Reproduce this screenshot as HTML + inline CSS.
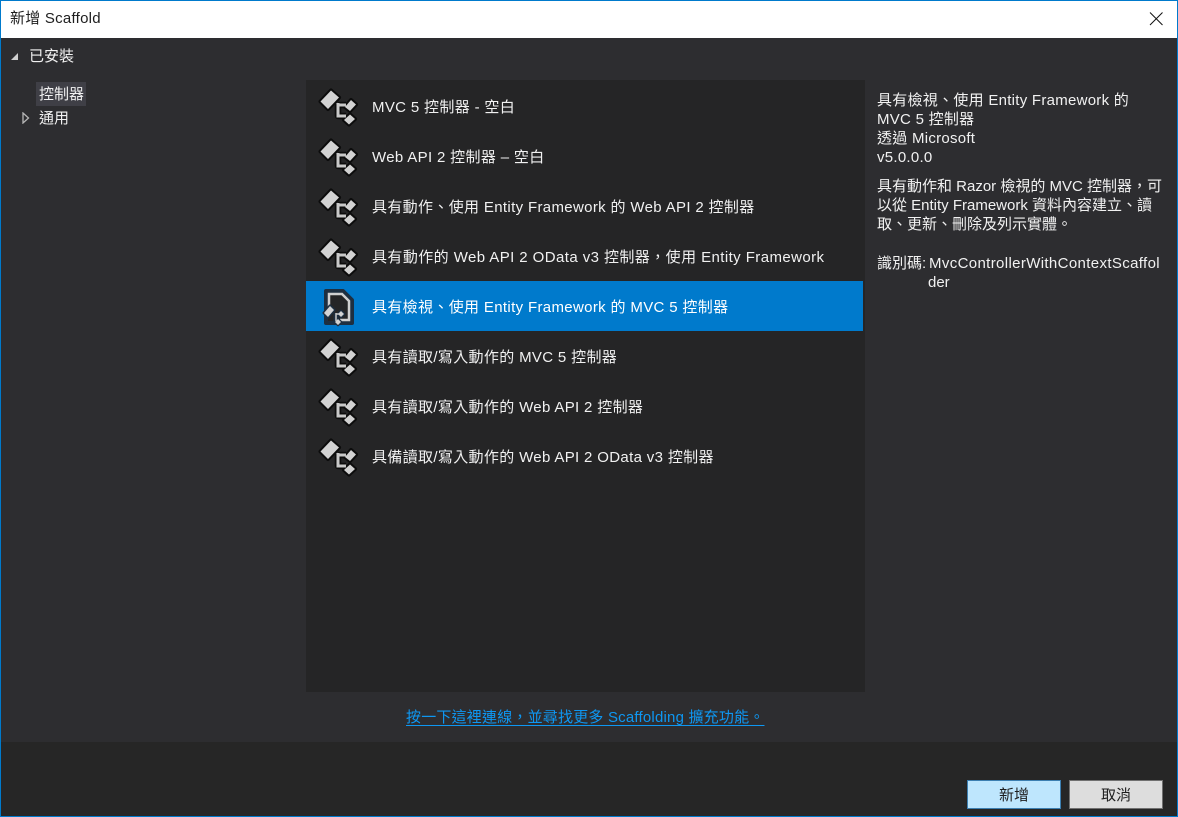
<!DOCTYPE html>
<html><head><meta charset="utf-8"><style>
html,body{margin:0;padding:0}
body{width:1178px;height:817px;overflow:hidden;position:relative;background:#2d2d30;font-family:"Liberation Sans","Noto Sans CJK TC",sans-serif;font-size:15px;color:#f1f1f1}
.a{position:absolute;white-space:nowrap;line-height:20px}
.b{position:absolute}
.it{position:absolute;left:372px;letter-spacing:.34px;color:#f1f1f1}
.r{line-height:19px;font-size:15px;letter-spacing:.27px}
.d{paint-order:stroke;stroke-linejoin:round}
</style></head><body>
<div class="b" style="left:0;top:0;width:1178px;height:817px;box-sizing:border-box;border:1px solid #007acc;z-index:5"></div>
<div class="b" style="left:0;top:0;width:1178px;height:38px;background:#fff"></div>
<div class="a" style="left:10px;top:9px;color:#1e1e1e;font-size:15px;letter-spacing:.25px">新增 Scaffold</div>
<svg class="b" style="left:1149px;top:12px" width="16" height="14"><path d="M1 .5L13.500 13M13.500 .5L1 13" stroke="#111" fill="none"/></svg>
<div class="b" style="left:0;top:742px;width:1178px;height:75px;background:#262626"></div>
<svg class="b" style="left:10px;top:52px" width="9" height="9"><path d="M8 1V8H1Z" fill="#d0d0d0"/></svg>
<div class="a" style="left:29px;top:47px;font-size:15px">已安裝</div>
<div class="b" style="left:36px;top:82px;width:50px;height:24px;background:#3f3f46"></div>
<div class="a" style="left:39px;top:85px;font-size:15px">控制器</div>
<svg class="b" style="left:22px;top:112px" width="8" height="12"><path d="M1 1L6.500 6L1 11Z" fill="none" stroke="#b5b5b5" stroke-width="1.300"/></svg>
<div class="a" style="left:39px;top:109px;font-size:15px">通用</div>
<div class="b" style="left:306px;top:80px;width:559px;height:612px;background:#252526"></div>
<div class="b" style="left:306px;top:281px;width:557px;height:50px;background:#007acc"></div>
<svg class="b" style="left:0;top:0" width="1178" height="817">
<defs><g id="ic">
<g fill="none" stroke="#0c0c0c" stroke-width="6.500" stroke-linejoin="round"><path d="M338 104V116H346M338 105H346"/></g>
<path class="d" d="M331 90.500L339 97.500L328 109L320.500 101.500Z" fill="#d2d2d2" stroke="#0c0c0c" stroke-width="4"/>
<path class="d" d="M351 100L356 104.500L350 111L345 107Z" fill="#d2d2d2" stroke="#0c0c0c" stroke-width="4"/>
<path class="d" d="M350 114.500L355 119L349 124.500L344 120Z" fill="#d2d2d2" stroke="#0c0c0c" stroke-width="4"/>
<path d="M338 103V116H346M338 105H346" fill="none" stroke="#c8c8c8" stroke-width="3"/>
</g></defs>
<use href="#ic"/><use href="#ic" y="50"/><use href="#ic" y="100"/><use href="#ic" y="150"/><use href="#ic" y="250"/><use href="#ic" y="300"/><use href="#ic" y="350"/>
<path d="M326 291H343L352 300V323H326Z" fill="#252526" stroke="#1e2f40" stroke-width="4" stroke-linejoin="round"/>
<path d="M329 308V294H342L349 301V320H340" fill="none" stroke="#d0d0d0" stroke-width="2.500"/>
<path d="M336 313V321H339" fill="none" stroke="#1e2f40" stroke-width="5"/>
<path class="d" d="M330 306L334 310L328 317L324 313Z" fill="#d2d2d2" stroke="#1e2f40" stroke-width="3"/>
<path class="d" d="M341 311L344 314L341 317L338 314Z" fill="#d2d2d2" stroke="#1e2f40" stroke-width="2.500"/>
<path class="d" d="M338 319L341 322L338 325L335 322Z" fill="#d2d2d2" stroke="#1e2f40" stroke-width="2.500"/>
<path d="M336 313V321M336 314H339" fill="none" stroke="#c8c8c8" stroke-width="1.500"/>
</svg>
<div class="a it" style="top:98px">MVC 5 控制器 - 空白</div>
<div class="a it" style="top:148px">Web API 2 控制器 – 空白</div>
<div class="a it" style="top:198px">具有動作、使用 Entity Framework 的 Web API 2 控制器</div>
<div class="a it" style="top:248px;letter-spacing:.42px">具有動作的 Web API 2 OData v3 控制器，使用 Entity Framework</div>
<div class="a it" style="top:298px;color:#fff">具有檢視、使用 Entity Framework 的 MVC 5 控制器</div>
<div class="a it" style="top:348px">具有讀取/寫入動作的 MVC 5 控制器</div>
<div class="a it" style="top:398px">具有讀取/寫入動作的 Web API 2 控制器</div>
<div class="a it" style="top:448px">具備讀取/寫入動作的 Web API 2 OData v3 控制器</div>
<div class="a r" style="left:877px;top:91px">具有檢視、使用 Entity Framework 的<br>MVC 5 控制器<br>透過 Microsoft<br>v5.0.0.0</div>
<div class="a r" style="left:877px;top:177px;letter-spacing:0">具有動作和 Razor 檢視的 MVC 控制器，可<br>以從 Entity Framework 資料內容建立、讀<br>取、更新、刪除及列示實體。</div>
<div class="a r" style="left:877px;top:254px;letter-spacing:0"><span>識別碼:</span><span style="position:absolute;left:52px;letter-spacing:.36px">MvcControllerWithContextScaffol</span><br><span style="margin-left:51px">der</span></div>
<div class="a" style="left:406px;top:708px;color:#0e97f2;text-decoration:underline;text-underline-offset:3px;font-size:15px;letter-spacing:.2px">按一下這裡連線，並尋找更多 Scaffolding 擴充功能。</div>
<div class="b" style="left:967px;top:780px;width:94px;height:29px;box-sizing:border-box;background:#bee6fd;border:1px solid #3c7fb1;color:#1e1e1e;text-align:center;line-height:29px;font-size:15px">新增</div>
<div class="b" style="left:1069px;top:780px;width:94px;height:29px;box-sizing:border-box;background:#dddddd;border:1px solid #707070;color:#1e1e1e;text-align:center;line-height:29px;font-size:15px">取消</div>
</body></html>
